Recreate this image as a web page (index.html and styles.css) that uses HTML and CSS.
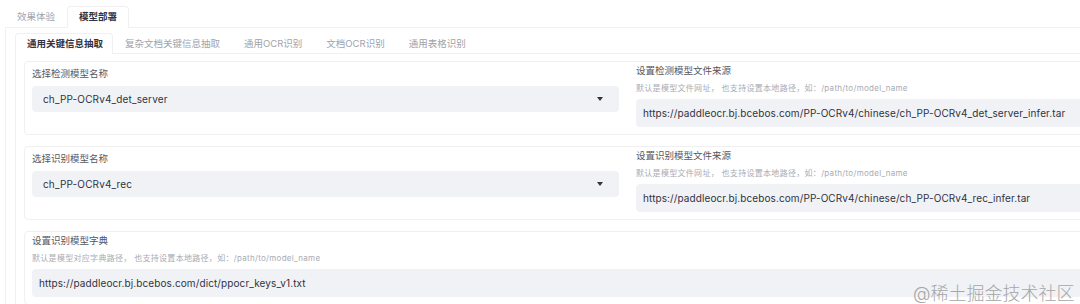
FILE: index.html
```html
<!DOCTYPE html>
<html lang="zh-CN">
<head>
    <meta charset="UTF-8">
    <meta name="viewport" content="width=device-width, initial-scale=1.0">
    <title>模型部署</title>
    <link rel="stylesheet" href="styles.css">
</head>
<body>
    <div class="page">
        <div class="tabs top-tabs">
            <div class="tab">效果体验</div>
            <div class="tab active">模型部署</div>
        </div>
        <div class="panel outer-panel">
            <div class="tabs sub-tabs">
                <div class="tab active">通用关键信息抽取</div>
                <div class="tab">复杂文档关键信息抽取</div>
                <div class="tab">通用OCR识别</div>
                <div class="tab">文档OCR识别</div>
                <div class="tab">通用表格识别</div>
            </div>
            <div class="panel inner-panel">
                <div class="card">
                    <div class="row">
                        <div class="field select-field">
                            <div class="label">选择检测模型名称</div>
                            <div class="select">
                                <span>ch_PP-OCRv4_det_server</span>
                                <svg class="caret" width="6" height="4" viewBox="0 0 6 4"><path d="M0 0H6L3 4Z" fill="#31333f"/></svg>
                            </div>
                        </div>
                        <div class="field">
                            <div class="label">设置检测模型文件来源</div>
                            <div class="help">默认是模型文件网址， 也支持设置本地路径，如：/path/to/model_name</div>
                            <div class="input">https://paddleocr.bj.bcebos.com/PP-OCRv4/chinese/ch_PP-OCRv4_det_server_infer.tar</div>
                        </div>
                    </div>
                </div>
                <div class="card">
                    <div class="row">
                        <div class="field select-field">
                            <div class="label">选择识别模型名称</div>
                            <div class="select">
                                <span>ch_PP-OCRv4_rec</span>
                                <svg class="caret" width="6" height="4" viewBox="0 0 6 4"><path d="M0 0H6L3 4Z" fill="#31333f"/></svg>
                            </div>
                        </div>
                        <div class="field">
                            <div class="label">设置识别模型文件来源</div>
                            <div class="help">默认是模型文件网址， 也支持设置本地路径，如：/path/to/model_name</div>
                            <div class="input">https://paddleocr.bj.bcebos.com/PP-OCRv4/chinese/ch_PP-OCRv4_rec_infer.tar</div>
                        </div>
                    </div>
                </div>
                <div class="card">
                    <div class="field">
                        <div class="label">设置识别模型字典</div>
                        <div class="help">默认是模型对应字典路径， 也支持设置本地路径，如：/path/to/model_name</div>
                        <div class="input">https://paddleocr.bj.bcebos.com/dict/ppocr_keys_v1.txt</div>
                    </div>
                </div>
            </div>
        </div>
        <div class="watermark">@稀土掘金技术社区</div>
    </div>
</body>
</html>
```

FILE: styles.css
```css
body {
    margin: 0;
    padding: 0;
    background-color: #fff;
    font-family: 'Inter', 'Noto Sans CJK SC', sans-serif;
    color: #31333f;
    overflow: hidden;
}
.page {
    position: relative;
    width: 1260px;
    height: 304px;
}
.tabs {
    display: flex;
}
.tab {
    position: relative;
    padding: 0 11px;
    font-size: 9.5px;
    color: #a0a3ab;
    border: 1px solid transparent;
    border-bottom: none;
    border-radius: 4px 4px 0 0;
    margin-bottom: -1px;
    background-color: transparent;
}
.tab.active {
    color: #31333f;
    font-weight: 600;
    background-color: #fff;
    border-color: #f0f0f2;
    padding-bottom: 1px;
}
.top-tabs {
    margin: 6px 0 0 5px;
}
.top-tabs .tab {
    line-height: 20px;
}
.sub-tabs .tab {
    line-height: 19px;
}
.sub-tabs .tab.active {
    padding-right: 9px;
}
.panel {
    border-top: 1px solid #f0f0f2;
    border-left: 1px solid #f0f0f2;
}
.outer-panel {
    margin-left: 5px;
    padding: 5px 0 0 9px;
}
.inner-panel {
    padding: 7px 0 0 8px;
}
.card {
    border: 1px solid #f0f0f2;
    border-radius: 4px;
    padding: 0 7px 7px;
    margin-bottom: 11px;
}
.row {
    display: grid;
    grid-template-columns: 587px 587px;
    column-gap: 17px;
}
.label {
    font-size: 9.5px;
    line-height: 12px;
    color: #55575f;
    margin-top: 3px;
}
.select-field .label {
    margin-top: 6px;
}
.help {
    font-size: 8px;
    line-height: 10px;
    letter-spacing: 0.3px;
    color: #a8abb3;
    margin-top: 6px;
}
.select {
    display: flex;
    justify-content: space-between;
    align-items: center;
    height: 26px;
    margin-top: 6px;
    padding: 0 16px 0 11px;
    background-color: #f0f2f6;
    border-radius: 4px;
    font-size: 10px;
    letter-spacing: 0.15px;
}
.input {
    height: 28px;
    line-height: 28px;
    margin-top: 6px;
    padding: 0 7px;
    background-color: #f0f2f6;
    border-radius: 4px;
    font-size: 10px;
    letter-spacing: 0.1px;
    white-space: nowrap;
}
.watermark {
    position: absolute;
    left: 913px;
    top: 277px;
    font-size: 18px;
    font-weight: 300;
    line-height: 22px;
    color: #a6a6a6;
}
```
